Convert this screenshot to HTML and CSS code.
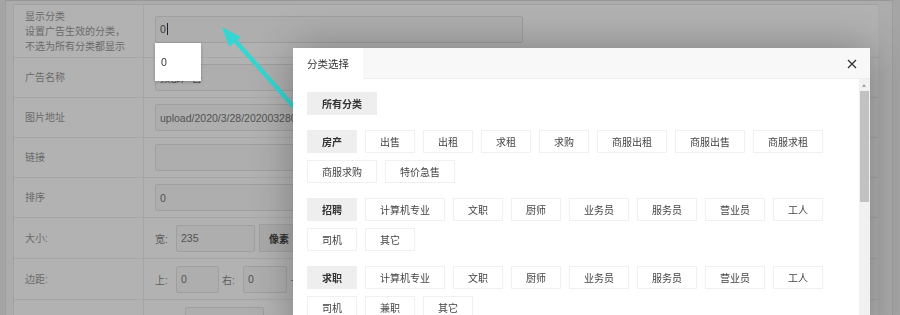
FILE: index.html
```html
<!DOCTYPE html>
<html lang="zh-CN">
<head>
<meta charset="utf-8">
<title>广告编辑</title>
<link rel="stylesheet" href="styles.css">
</head>
<body>
<div class="frame">
  <div class="form">
    <div class="row row-first">
      <div class="label"><div>显示分类</div><div>设置广告生效的分类，</div><div>不选为所有分类都显示</div></div>
      <div class="value value-first">
        <div class="input w-full has-suggest"><span class="dark">0</span><span class="caret"></span>
          <div class="suggest">0</div>
        </div>
      </div>
    </div>
    <div class="row">
      <div class="label">广告名称</div>
      <div class="value"><div class="input w-full">顶部广告</div></div>
    </div>
    <div class="row">
      <div class="label">图片地址</div>
      <div class="value"><div class="input w-full">upload/2020/3/28/20200328034512.jpg</div></div>
    </div>
    <div class="row">
      <div class="label">链接</div>
      <div class="value"><div class="input w-full"></div></div>
    </div>
    <div class="row">
      <div class="label">排序</div>
      <div class="value"><div class="input w-full">0</div></div>
    </div>
    <div class="row row-lg">
      <div class="label">大小:</div>
      <div class="value">
        <span class="pre">宽:</span><div class="input w-size">235</div>
        <div class="addon">像素</div>
      </div>
    </div>
    <div class="row row-lg">
      <div class="label">边距:</div>
      <div class="value">
        <span class="pre">上:</span><div class="input w-sm">0</div>
        <span class="pre pre-gap">右:</span><div class="input w-sm2">0</div>
        <span class="dash">-</span>
      </div>
    </div>
    <div class="row">
      <div class="label"></div>
      <div class="value value-top">
        <div class="input w-size"></div>
      </div>
    </div>
  </div>
</div>

<div class="shade"></div>

<svg class="pointer" width="900" height="315" viewBox="0 0 900 315">
  <line x1="302" y1="116" x2="232" y2="37" stroke="#37d5d1" stroke-width="4.5" stroke-linecap="round"/>
  <polygon points="222,27 229,47 241,37" fill="#37d5d1"/>
</svg>

<div class="modal">
  <div class="modal-head">
    <div class="tab">分类选择</div>
    <svg class="close" width="10" height="10" viewBox="0 0 10 10"><path d="M1 1 L9 9 M9 1 L1 9" stroke="#333" stroke-width="1.3" fill="none"/></svg>
  </div>
  <div class="modal-body">
    <div class="cats">
      <div class="group">
        <span class="btn head">所有分类</span>
      </div>
      <div class="group">
        <span class="btn head">房产</span>
        <span class="btn">出售</span>
        <span class="btn">出租</span>
        <span class="btn">求租</span>
        <span class="btn">求购</span>
        <span class="btn">商服出租</span>
        <span class="btn">商服出售</span>
        <span class="btn">商服求租</span>
        <span class="btn">商服求购</span>
        <span class="btn">特价急售</span>
      </div>
      <div class="group">
        <span class="btn head">招聘</span>
        <span class="btn">计算机专业</span>
        <span class="btn">文职</span>
        <span class="btn">厨师</span>
        <span class="btn">业务员</span>
        <span class="btn">服务员</span>
        <span class="btn">营业员</span>
        <span class="btn">工人</span>
        <span class="btn">司机</span>
        <span class="btn">其它</span>
      </div>
      <div class="group">
        <span class="btn head">求职</span>
        <span class="btn">计算机专业</span>
        <span class="btn">文职</span>
        <span class="btn">厨师</span>
        <span class="btn">业务员</span>
        <span class="btn">服务员</span>
        <span class="btn">营业员</span>
        <span class="btn">工人</span>
        <span class="btn">司机</span>
        <span class="btn">兼职</span>
        <span class="btn">其它</span>
      </div>
    </div>
    <div class="scroll">
      <div class="scroll-up"></div>
      <div class="scroll-thumb"></div>
    </div>
  </div>
</div>
</body>
</html>
```

FILE: styles.css
```css
* { box-sizing: border-box; }

html, body {
  margin: 0;
  width: 900px;
  height: 315px;
  overflow: hidden;
}

body {
  background: #ececec;
  font-family: "Liberation Sans", "Noto Sans CJK SC", sans-serif;
  font-size: 10px;
  color: #666;
}

.frame {
  margin-left: 5px;
  width: 888px;
  height: 315px;
  background: #f6f6f6;
  border-left: 1px solid #e2e2e2;
  border-right: 1px solid #e2e2e2;
  border-top: 1px solid #d8d8d8;
  padding: 3px 14px 0 7px;
}

.form {
  background: #fff;
  border-left: 1px solid #e9e9e9;
  border-top: 1px solid #e9e9e9;
}

.row {
  display: flex;
  height: 40px;
  border-bottom: 1px solid #eee;
}

.row-first { height: 53px; }
.row-lg { height: 41px; }

.label {
  width: 130px;
  flex: none;
  border-right: 1px solid #eee;
  padding-left: 11px;
  display: flex;
  flex-direction: column;
  justify-content: center;
  color: #9a9a9a;
  line-height: 15px;
}

.value {
  flex: 1;
  display: flex;
  align-items: center;
  padding-left: 11px;
}

.value-first { padding-bottom: 4px; }
.value-top { align-items: flex-start; padding-top: 7px; padding-left: 41px; }

.input {
  height: 27px;
  border: 1px solid #e4e4e4;
  background: #fafafa;
  border-radius: 2px;
  padding-left: 4px;
  display: flex;
  align-items: center;
  font-size: 10.5px;
  color: #777;
  white-space: nowrap;
  overflow: hidden;
  flex: none;
}

.w-full { width: 368px; }
.w-size { width: 79px; }
.w-sm { width: 43px; }
.w-sm2 { width: 44px; }

.has-suggest { position: relative; overflow: visible; }

.dark { color: #555; }

.caret {
  display: inline-block;
  width: 1px;
  height: 12px;
  background: #333;
  margin-left: 1px;
}

.suggest {
  position: absolute;
  left: -1px;
  top: 26px;
  width: 46px;
  height: 38px;
  background: #fff;
  box-shadow: 0 1px 3px rgba(0, 0, 0, 0.25);
  z-index: 12;
  display: flex;
  align-items: center;
  padding-left: 6px;
  color: #333;
  font-size: 10.5px;
}

.pre {
  width: 21px;
  flex: none;
  color: #888;
}

.pre-gap { margin-left: 3px; }

.addon {
  margin-left: 4px;
  height: 28px;
  padding: 0 9px;
  border: 1px solid #e4e4e4;
  background: #f4f4f4;
  display: flex;
  align-items: center;
  color: #444;
  font-weight: bold;
  flex: none;
}

.dash { margin-left: 4px; color: #888; }

.shade {
  position: fixed;
  left: 0;
  top: 0;
  width: 900px;
  height: 315px;
  background: rgba(0, 0, 0, 0.3);
  z-index: 10;
}

.pointer {
  position: fixed;
  left: 0;
  top: 0;
  z-index: 15;
}

.modal {
  position: fixed;
  left: 293px;
  top: 48px;
  width: 577px;
  height: 290px;
  background: #fff;
  box-shadow: 1px 1px 40px rgba(0, 0, 0, 0.3);
  z-index: 20;
  display: flex;
  flex-direction: column;
}

.modal-head {
  position: relative;
  height: 31px;
  flex: none;
  background: #f8f8f8;
  border-bottom: 1px solid #eee;
  display: flex;
}

.tab {
  background: #fff;
  height: 31px;
  padding: 0 14px;
  display: flex;
  align-items: center;
  font-size: 10.5px;
  color: #333;
}

.close {
  position: absolute;
  right: 13px;
  top: 11px;
}

.modal-body {
  flex: 1;
  display: flex;
}

.cats {
  flex: 1;
  padding: 13px 0 0 14px;
}

.group {
  display: flex;
  flex-wrap: wrap;
  gap: 7px 8px;
  margin-bottom: 15px;
}

.btn {
  height: 23px;
  padding: 0 14px;
  border: 1px solid #f0f0f0;
  background: #fff;
  display: flex;
  align-items: center;
  color: #444;
  font-size: 10px;
  white-space: nowrap;
}

.btn.head {
  background: #eee;
  border-color: #eee;
  font-weight: bold;
  color: #333;
}

.scroll {
  width: 11px;
  flex: none;
  background: #f1f1f1;
  position: relative;
}

.scroll-up {
  position: absolute;
  left: 3px;
  top: 5px;
  width: 0;
  height: 0;
  border-left: 2.5px solid transparent;
  border-right: 2.5px solid transparent;
  border-bottom: 3px solid #a3a3a3;
}

.scroll-thumb {
  position: absolute;
  left: 1px;
  top: 12px;
  width: 9px;
  height: 111px;
  background: #c1c1c1;
}
```
